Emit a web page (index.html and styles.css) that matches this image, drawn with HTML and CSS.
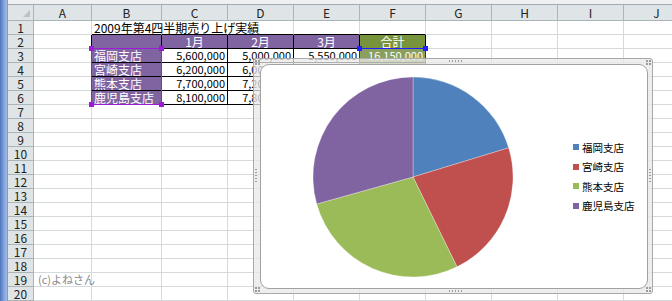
FILE: index.html
```html
<!DOCTYPE html>
<html lang="ja">
<head>
  <meta charset="UTF-8">
  <meta name="viewport" content="width=device-width, initial-scale=1.0">
  <title>2009年第4四半期売り上げ実績</title>
  <link rel="stylesheet" href="styles.css">
</head>
<body>
  <div class="window">
    <div class="win-edge"></div>
    <div class="sheet">
      <div class="formula-edge"></div>
      <div class="grid" id="grid">
        <!-- cells are added by the script below -->
      </div>

      <div class="sel sel-names">
        <span class="handle tl"></span><span class="handle tr"></span>
        <span class="handle bl"></span><span class="handle br"></span>
      </div>
      <div class="sel sel-total">
        <span class="handle tl"></span><span class="handle tr"></span>
      </div>

      <div class="chart">
        <span class="grip grip-h grip-top"></span>
        <span class="grip grip-h grip-bottom"></span>
        <span class="grip grip-v grip-left"></span>
        <span class="grip grip-v grip-right"></span>
        <span class="grip grip-c c-tl"></span>
        <span class="grip grip-c c-tr"></span>
        <span class="grip grip-c c-bl"></span>
        <span class="grip grip-c c-br"></span>
        <div class="chart-area">
          <svg class="pie" width="202" height="202" viewBox="0 0 202 202">
            <path class="slice fukuoka" d="M101,101 L101,1 A100,100 0 0 1 196.65,71.83 Z"/>
            <path class="slice miyazaki" d="M101,101 L196.65,71.83 A100,100 0 0 1 144.98,190.81 Z"/>
            <path class="slice kumamoto" d="M101,101 L144.98,190.81 A100,100 0 0 1 4.70,127.98 Z"/>
            <path class="slice kagoshima" d="M101,101 L4.70,127.98 A100,100 0 0 1 101,1 Z"/>
          </svg>
          <ul class="legend">
            <li><span class="swatch fukuoka"></span>福岡支店</li>
            <li><span class="swatch miyazaki"></span>宮崎支店</li>
            <li><span class="swatch kumamoto"></span>熊本支店</li>
            <li><span class="swatch kagoshima"></span>鹿児島支店</li>
          </ul>
        </div>
      </div>
    </div>
  </div>

  <script>
    const cols = ["A", "B", "C", "D", "E", "F", "G", "H", "I", "J"];
    const grid = document.getElementById("grid");

    // sheet contents, keyed by cell address
    const cells = {
      B1: { text: "2009年第4四半期売り上げ実績", cls: "title" },
      B2: { cls: "head" },
      C2: { text: "1月", cls: "head" },
      D2: { text: "2月", cls: "head" },
      E2: { text: "3月", cls: "head" },
      F2: { text: "合計", cls: "total-head" },
      A19: { text: "(c)よねさん", cls: "credit" }
    };

    const rows = [
      ["福岡支店", "5,600,000", "5,000,000", "5,550,000", "16,150,000"],
      ["宮崎支店", "6,200,000", "6,000,000", "6,100,000", "18,300,000"],
      ["熊本支店", "7,700,000", "7,200,000", "7,500,000", "22,400,000"],
      ["鹿児島支店", "8,100,000", "7,800,000", "7,900,000", "23,800,000"]
    ];
    rows.forEach((row, i) => {
      const r = i + 3;
      cells["B" + r] = { text: row[0], cls: "store" };
      cells["C" + r] = { text: row[1], cls: "num" };
      cells["D" + r] = { text: row[2], cls: "num" };
      cells["E" + r] = { text: row[3], cls: "num" };
      cells["F" + r] = { text: row[4], cls: "num total" };
    });

    function addCell(cls, text = "") {
      const div = document.createElement("div");
      div.className = cls;
      div.textContent = text;
      grid.appendChild(div);
    }

    // column headers
    addCell("cell corner");
    cols.forEach(c => addCell("cell ch", c));

    for (let r = 1; r <= 20; r++) {
      addCell("cell rh", r);
      cols.forEach((c, ci) => {
        const data = cells[c + r] || {};
        let cls = "cell " + (data.cls || "");
        const inTable = r >= 2 && r <= 6 && ci >= 1 && ci <= 5;
        if (inTable) cls += " line-r line-b";
        if (r === 1 && ci >= 1 && ci <= 5) cls += " line-b";
        if (ci === 0 && r >= 2 && r <= 6) cls += " line-r";
        if (r === 1 && (c === "B" || c === "C")) cls += " spill";
        addCell(cls, data.text);
      });
    }
  </script>
</body>
</html>
```

FILE: styles.css
```css
body {
  margin: 0;
  width: 672px;
  height: 301px;
  overflow: hidden;
  background-color: #ffffff;
  font-family: "Noto Sans CJK JP", "Noto Sans", sans-serif;
  font-size: 12px;
  color: #000;
}
.window {
  display: flex;
  height: 301px;
}
.win-edge {
  width: 7px;
  flex: none;
  background: linear-gradient(to right, #4f74bb 0, #7397d6 3px, #9cb6e4 6px);
  border-right: 1px solid #8e9aa6;
}
.sheet {
  flex: 1;
  position: relative;
  overflow: hidden;
}
.formula-edge {
  height: 4px;
  background-color: #eef0f2;
  border-bottom: 1px solid #a3abb2;
}

.grid {
  display: grid;
  grid-template-columns: 26px 58px 70px repeat(8, 66px);
  grid-template-rows: 16px;
  grid-auto-rows: 14px;
}
.cell {
  box-sizing: border-box;
  border-right: 1px solid #d5dbdc;
  border-bottom: 1px solid #d5dbdc;
  padding: 0 2px;
  line-height: 13px;
  white-space: nowrap;
  overflow: hidden;
}
.ch, .rh, .corner {
  background-color: #dfe5e7;
  border-color: #aab5ba;
  text-align: center;
  color: #222;
  padding: 0;
}
.ch {
  line-height: 15px;
}
.corner {
  position: relative;
}
.corner::after {
  content: "";
  position: absolute;
  right: 3px;
  bottom: 3px;
  border-left: 7px solid transparent;
  border-bottom: 7px solid #b9c2c6;
}

.line-r {
  border-right-color: #000;
}
.line-b {
  border-bottom-color: #000;
}
.spill {
  border-right-color: transparent;
}
.title {
  overflow: visible;
}
.head {
  background-color: #8064a2;
  color: #fff;
  text-align: center;
}
.total-head {
  background-color: #77933c;
  color: #fff;
  text-align: center;
}
.store {
  background-color: #8064a2;
  color: #fff;
}
.num {
  text-align: right;
  font-size: 11px;
}
.total {
  background-color: #8a9e5e;
  color: #fff;
}
.credit {
  overflow: visible;
  color: #8a8a8a;
  padding-left: 4px;
  font-size: 11px;
}

/* selected ranges */
.sel {
  position: absolute;
  box-sizing: border-box;
  top: 48px;
  height: 57px;
}
.sel-names {
  left: 83px;
  width: 71px;
  border: 1px solid #9b1cd4;
  color: #9b1cd4;
}
.sel-total {
  left: 351px;
  width: 67px;
  border: 1px solid #1f1fff;
  color: #1f1fff;
}
.handle {
  position: absolute;
  width: 5px;
  height: 5px;
  background-color: currentColor;
}
.handle.tl { left: -3px; top: -3px; }
.handle.tr { right: -3px; top: -3px; }
.handle.bl { left: -3px; bottom: -3px; }
.handle.br { right: -3px; bottom: -3px; }

/* chart */
.chart {
  position: absolute;
  left: 245px;
  top: 58px;
  width: 400px;
  height: 236px;
  box-sizing: border-box;
  border: 1px solid #a9a9a9;
  border-radius: 3px;
  background-color: rgba(232, 232, 232, 0.75);
  padding: 5px 4px 4px 6px;
}
.chart-area {
  box-sizing: border-box;
  height: 100%;
  background-color: #fff;
  border: 1px solid #a2a2a2;
  border-radius: 9px;
  display: flex;
  align-items: center;
  padding-left: 51px;
}
.pie {
  flex: none;
}
.slice {
  stroke: #ffffff;
  stroke-width: 0.6;
  stroke-opacity: 0.5;
}
.fukuoka { fill: #4f81bd; background-color: #4f81bd; }
.miyazaki { fill: #c0504d; background-color: #c0504d; }
.kumamoto { fill: #9bbb59; background-color: #9bbb59; }
.kagoshima { fill: #8064a2; background-color: #8064a2; }
.legend {
  list-style: none;
  margin: 0 0 0 59px;
  padding: 0;
  font-size: 10.5px;
  color: #000;
}
.legend li {
  display: flex;
  align-items: center;
  gap: 3px;
  height: 19.5px;
}
.swatch {
  width: 6px;
  height: 6px;
}

.grip {
  position: absolute;
}
.grip-h {
  width: 13px;
  height: 2px;
  left: 195px;
  background: repeating-linear-gradient(to right, #9c9c9c 0 1px, transparent 1px 3px);
}
.grip-top { top: 1px; }
.grip-bottom { bottom: 1px; }
.grip-v {
  width: 2px;
  height: 13px;
  top: 110px;
  background: repeating-linear-gradient(to bottom, #9c9c9c 0 1px, transparent 1px 3px);
}
.grip-left { left: 1px; }
.grip-right { right: 1px; }
.grip-c {
  width: 5px;
  height: 5px;
  background: radial-gradient(circle at 1px 1px, #9c9c9c 0.8px, transparent 1px) 0 0 / 3px 3px;
}
.c-tl { left: 1px; top: 1px; }
.c-tr { right: 1px; top: 1px; }
.c-bl { left: 1px; bottom: 1px; }
.c-br { right: 1px; bottom: 1px; }
```
